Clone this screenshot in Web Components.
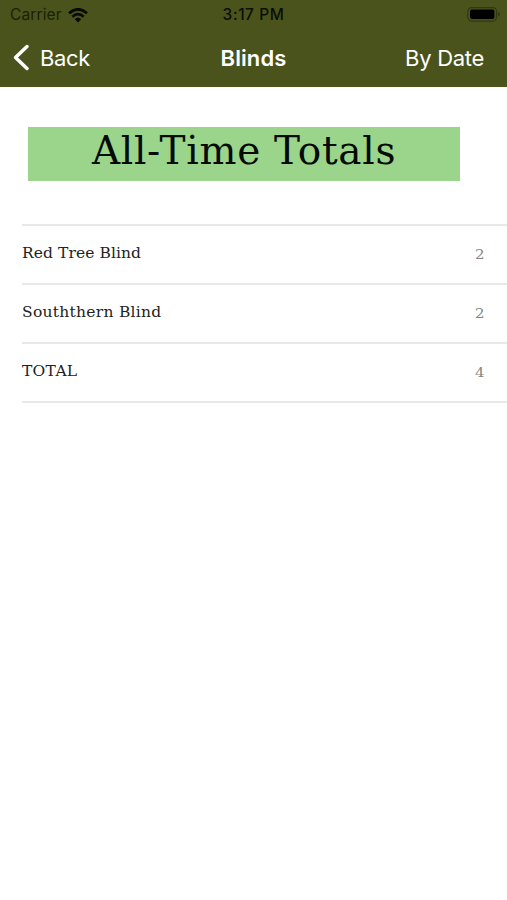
<!DOCTYPE html>
<html lang="en">
<head>
<meta charset="utf-8">
<title>Blinds</title>
<style>
html, body { margin: 0; background: #fff; }
</style>
</head>
<body>
<blinds-screen></blinds-screen>
<script>
const define = (name, html) => customElements.define(name, class extends HTMLElement {
  constructor() {
    super();
    this.attachShadow({ mode: 'open' }).innerHTML = html;
  }
});

define('status-bar', `
<style>
:host { display: grid; grid-template-columns: 1fr auto 1fr; align-items: center; height: 30px; box-sizing: border-box; font: 500 15.5px/30px Inter, sans-serif; color: #0b0e05; }
.left { display: flex; align-items: center; gap: 6px; padding-left: 10px; font-weight: 400; color: #1a200a; }
.carrier { letter-spacing: .13px; }
.time { letter-spacing: .55px; }
.right { display: flex; justify-content: flex-end; padding-right: 7px; }
svg { display: block; }
</style>
<div class="left"><span class="carrier">Carrier</span>
<svg width="20" height="15" viewBox="0 0 20 15" fill="none" stroke="#080a03" stroke-width="2.7"><path d="M1 5.3Q10-2.7 19 5.3M4.3 8.7Q10 3.7 15.7 8.7"/><path d="M6.8 11.2Q10 8.5 13.2 11.2L10 14.4Z" fill="#080a03" stroke="none"/></svg></div>
<span class="time">3:17 PM</span>
<div class="right"><svg width="33" height="16" viewBox="0 0 33 16"><rect x=".8" y=".6" width="28.8" height="13.5" rx="4" fill="none" stroke="#303a10" stroke-width="1.2"/><rect x="3" y="2.6" width="24.4" height="9.5" rx="2" fill="#000"/><path d="M31 5q1.8.8 1.8 2.3T31 9.6Z" fill="#303a10"/></svg></div>
`);

define('nav-bar', `
<style>
:host { display: grid; grid-template-columns: 1fr auto 1fr; align-items: center; height: 56px; box-sizing: border-box; font: 400 22px/56px Inter, sans-serif; color: #fff; }
.back { display: flex; align-items: center; gap: 10px; padding-left: 13px; letter-spacing: -.35px; }
.title { font-weight: 600; letter-spacing: .1px; }
.action { text-align: right; padding-right: 23px; letter-spacing: -.3px; }
svg { display: block; }
</style>
<div class="back"><svg width="17" height="28" viewBox="0 0 17 28" fill="none" stroke="#fff" stroke-width="3.5" stroke-linecap="round" stroke-linejoin="round"><path d="M14 2.5 2.5 13.5 14 24.5"/></svg><slot name="back"></slot></div>
<div class="title"><slot></slot></div>
<div class="action"><slot name="action"></slot></div>
`);

define('totals-banner', `
<style>
:host { display: block; height: 54px; margin: 40px 47px 43px 28px; background: #9ad58b; color: #050a04; text-align: center; font: 400 39px/48px "DejaVu Serif", serif; letter-spacing: .7px; white-space: nowrap; }
</style><span><slot></slot></span>
`);

define('total-row', `
<style>
:host { display: flex; justify-content: space-between; align-items: flex-start; height: 59.2px; margin-left: 22px; padding-right: 22px; box-sizing: border-box; border-top: 2px solid #e9e9e9; font: 400 15.5px/54px "DejaVu Serif", serif; letter-spacing: var(--tracking, .08px); color: #222; }
:host([last]) { height: 61px; border-bottom: 2px solid #e9e9e9; }
.count { font-size: 12px; line-height: 59px; letter-spacing: 0; color: #858585; transform: scaleX(1.25); transform-origin: right; }
</style>
<span class="label"><slot></slot></span><span class="count"><slot name="count"></slot></span>
`);

define('blinds-screen', `
<style>
:host { display: block; min-height: 900px; background: #fff; }
header { background: #49531b; height: 87px; display: flow-root; }
main { display: flow-root; }
.wide { --tracking: .28px; }
</style>
<header><status-bar></status-bar>
<nav-bar><span slot="back">Back</span>Blinds<span slot="action">By Date</span></nav-bar></header>
<main>
<totals-banner>All-Time Totals</totals-banner>
<total-row>Red Tree Blind<span slot="count">2</span></total-row>
<total-row class="wide">Souththern Blind<span slot="count">2</span></total-row>
<total-row class="wide" last>TOTAL<span slot="count">4</span></total-row>
</main>
`);
</script>
</body>
</html>
